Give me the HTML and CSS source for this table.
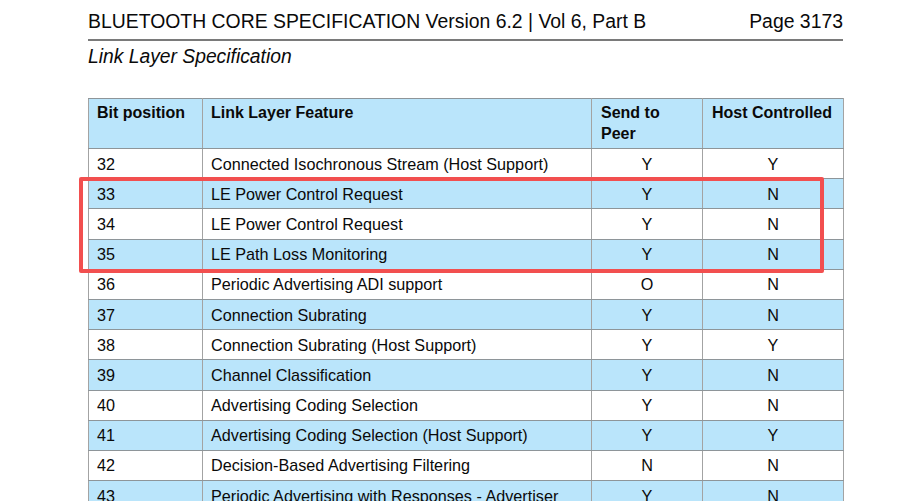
FILE: index.html
```html
<!DOCTYPE html>
<html lang="en">
<head>
<meta charset="utf-8">
<title>Link Layer Specification</title>
<link rel="stylesheet" href="styles.css">
</head>
<body>
<div class="page">
  <div class="running-head">
    <span>BLUETOOTH CORE SPECIFICATION Version 6.2 | Vol 6, Part B</span>
    <span>Page 3173</span>
  </div>
  <div class="subtitle">Link Layer Specification</div>
  <div class="table-wrap">
    <table class="features">
      <colgroup>
        <col class="c-bit"><col class="c-feat"><col class="c-peer"><col class="c-host">
      </colgroup>
      <thead>
        <tr>
          <th>Bit position</th>
          <th>Link Layer Feature</th>
          <th>Send to<br>Peer</th>
          <th>Host Controlled</th>
        </tr>
      </thead>
      <tbody>
        <tr><td>32</td><td>Connected Isochronous Stream (Host Support)</td><td class="ctr">Y</td><td class="ctr">Y</td></tr>
        <tr class="alt"><td>33</td><td>LE Power Control Request</td><td class="ctr">Y</td><td class="ctr">N</td></tr>
        <tr><td>34</td><td>LE Power Control Request</td><td class="ctr">Y</td><td class="ctr">N</td></tr>
        <tr class="alt"><td>35</td><td>LE Path Loss Monitoring</td><td class="ctr">Y</td><td class="ctr">N</td></tr>
        <tr><td>36</td><td>Periodic Advertising ADI support</td><td class="ctr">O</td><td class="ctr">N</td></tr>
        <tr class="alt"><td>37</td><td>Connection Subrating</td><td class="ctr">Y</td><td class="ctr">N</td></tr>
        <tr><td>38</td><td>Connection Subrating (Host Support)</td><td class="ctr">Y</td><td class="ctr">Y</td></tr>
        <tr class="alt"><td>39</td><td>Channel Classification</td><td class="ctr">Y</td><td class="ctr">N</td></tr>
        <tr><td>40</td><td>Advertising Coding Selection</td><td class="ctr">Y</td><td class="ctr">N</td></tr>
        <tr class="alt"><td>41</td><td>Advertising Coding Selection (Host Support)</td><td class="ctr">Y</td><td class="ctr">Y</td></tr>
        <tr><td>42</td><td>Decision-Based Advertising Filtering</td><td class="ctr">N</td><td class="ctr">N</td></tr>
        <tr class="alt"><td>43</td><td>Periodic Advertising with Responses - Advertiser</td><td class="ctr">Y</td><td class="ctr">N</td></tr>
      </tbody>
    </table>
    <div class="highlight"></div>
  </div>
</div>
</body>
</html>
```

FILE: styles.css
```css
html, body {
  margin: 0;
  padding: 0;
  background: #ffffff;
  overflow: hidden;
}

body {
  font-family: "Liberation Sans", Arial, sans-serif;
  color: #0a0a0a;
}

.page {
  margin-left: 88px;
  width: 755px;
}

.running-head {
  display: flex;
  justify-content: space-between;
  font-size: 19.4px;
  line-height: 22px;
  padding-top: 10px;
  padding-bottom: 7px;
  border-bottom: 2px solid #7a7a7a;
}

.subtitle {
  font-style: italic;
  font-size: 19.3px;
  line-height: 22px;
  margin-top: 5px;
}

.table-wrap {
  position: relative;
  margin-top: 30px;
}

.features {
  border-collapse: collapse;
  width: 755px;
  table-layout: fixed;
  font-size: 16.2px;
}

.c-bit { width: 114px; }
.c-feat { width: 389px; }
.c-peer { width: 111px; }
.c-host { width: 141px; }

.features th,
.features td {
  border-left: 1px solid #a3a3a3;
  border-right: 1px solid #a3a3a3;
  border-top: 1px solid #8e9599;
  border-bottom: 1px solid #8e9599;
  padding: 0 8px;
  text-align: left;
}

.features thead th {
  background: #bae5fb;
  font-weight: bold;
  font-size: 16px;
  vertical-align: top;
  line-height: 21px;
  padding-top: 3px;
  height: 46px;
}

.features thead th:nth-child(3),
.features thead th:nth-child(4) {
  padding-left: 9px;
}

.features tbody tr {
  height: 30.2px;
}

.features tbody td {
  line-height: 20px;
  vertical-align: middle;
  white-space: nowrap;
}

.features tbody tr.alt td {
  background: #bae5fb;
}

.features td.ctr {
  text-align: center;
}

.highlight {
  position: absolute;
  left: -9px;
  top: 79px;
  width: 737px;
  height: 88px;
  border: 4px solid #f24f4f;
  border-radius: 2px;
  pointer-events: none;
}
```
